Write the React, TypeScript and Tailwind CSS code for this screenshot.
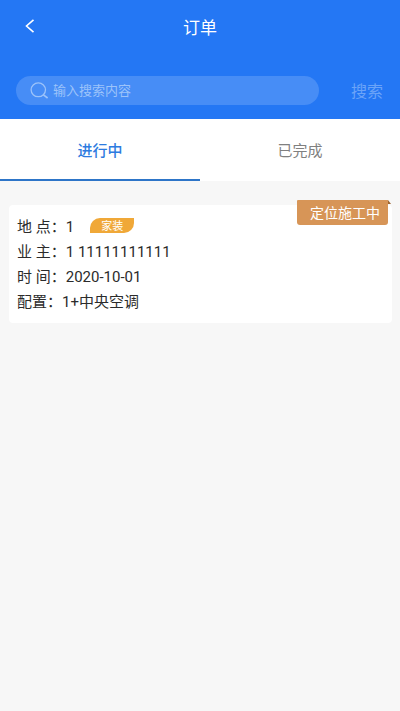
import { useState } from "react"

type TabId = "active" | "done"

const tabs: { id: TabId; label: string }[] = [
  { id: "active", label: "进行中" },
  { id: "done", label: "已完成" },
]

const orders = [
  {
    id: 1,
    status: "定位施工中",
    tag: "家装",
    tab: "active",
    rows: [
      { label: "地 点：", value: "1" },
      { label: "业 主：", value: "1 11111111111" },
      { label: "时 间：", value: "2020-10-01" },
      { label: "配置：", value: "1+中央空调" },
    ],
  },
]

function StatusRibbon({ text }: { text: string }) {
  return (
    <div className="absolute -top-[5px] right-[1px] flex items-start">
      <span className="h-[25px] rounded-b-[3px] rounded-tl-[1px] bg-[#d79557] pr-2 pl-[13px] text-[14px] leading-[27px] text-white">
        {text}
      </span>
      <svg width="3" height="4" viewBox="0 0 3 4" aria-hidden="true">
        <path d="M0 0L3 4H0Z" fill="#9c6430" />
      </svg>
    </div>
  )
}

export default function App() {
  const [tab, setTab] = useState<TabId>("active")
  const [search, setSearch] = useState("")

  return (
    <div className="min-h-screen bg-[#f7f7f7] font-[Roboto,'Noto_Sans_CJK_SC',sans-serif]">
      <header className="bg-[#2477f4] pb-[14px]">
        <div className="grid grid-cols-3 items-center px-4 pt-3">
          <button aria-label="返回" className="flex size-7 items-center justify-center">
            <svg width="10" height="14" viewBox="0 0 10 14" fill="none" stroke="#fff" strokeWidth="1.6" aria-hidden="true">
              <path d="M8.5 0.8L1.5 7L8.5 13.2" />
            </svg>
          </button>
          <h1 className="pt-1 text-center text-[17px] leading-6 text-white">订单</h1>
        </div>

        <form className="mt-9 flex items-center pr-[17px] pl-4" onSubmit={e => e.preventDefault()}>
          <label className="flex h-[29px] flex-1 items-center gap-1 rounded-full bg-[#478df6] pl-[14px]">
            <svg width="19" height="17" viewBox="0 0 19 17" fill="none" stroke="#9cc3fa" strokeWidth="1.3" aria-hidden="true">
              <ellipse cx="8.3" cy="7.8" rx="7.2" ry="6.9" />
              <path d="M13.4 12.8L17.6 16" strokeWidth="1.6" />
            </svg>
            <input
              aria-label="搜索"
              value={search}
              onChange={e => setSearch(e.target.value)}
              placeholder="输入搜索内容"
              className="min-w-0 flex-1 bg-transparent pt-px text-[13px] text-white outline-none placeholder:text-[#9cc3fa]"
            />
          </label>
          <button className="ml-8 pt-0.5 text-[16px] text-[#6ba4f8]">搜索</button>
        </form>
      </header>

      <nav className="grid grid-cols-2 bg-white">
        {tabs.map(t => (
          <button
            key={t.id}
            onClick={() => setTab(t.id)}
            className={`h-[62px] border-b-2 pt-1 text-[15px] ${tab === t.id ? "border-[#2d75c8] font-medium text-[#2d7be0]" : "border-transparent text-[#808080]"}`}
          >
            {t.label}
          </button>
        ))}
      </nav>

      <main className="space-y-4 pt-6 pr-2 pl-[9px]">
        {orders.filter(o => o.tab === tab).map(o => (
          <article key={o.id} className="relative rounded-[4px] bg-white px-2 pt-[10px] pb-2">
            <StatusRibbon text={o.status} />
            {o.rows.map((row, i) => (
              <div key={row.label} className="flex h-[25px] items-center text-[15px] text-[#2b2b2b]">
                <span>{row.label}</span>
                <span>{row.value}</span>
                {i === 0 && (
                  <span className="mb-1 ml-4 h-[15px] w-[44px] rounded-tl-[10px] rounded-br-[10px] bg-[#f0a838] text-center text-[11px] leading-[17px] text-white">
                    {o.tag}
                  </span>
                )}
              </div>
            ))}
          </article>
        ))}
      </main>
    </div>
  )
}
